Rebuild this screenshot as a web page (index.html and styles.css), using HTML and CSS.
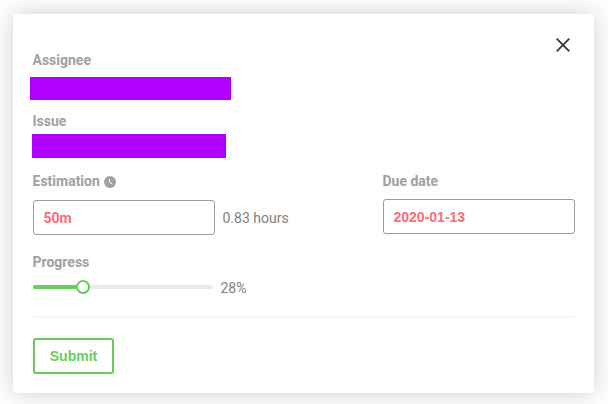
FILE: index.html
```html
<!DOCTYPE html>
<html lang="en">
<head>
<meta charset="utf-8">
<title>Edit task</title>
<link rel="stylesheet" href="styles.css">
</head>
<body>
<form class="card">
  <button class="close" type="button" aria-label="Close">
    <svg width="14" height="14" viewBox="0 0 14 14"><path d="M.7.7l12.6 12.6M13.3.7L.7 13.3"/></svg>
  </button>
  <div class="label">Assignee</div>
  <div class="redacted assignee"></div>
  <div class="label">Issue</div>
  <div class="redacted issue"></div>
  <div class="columns">
    <div class="estimation">
      <div class="label">Estimation
        <svg class="clock" width="12" height="12" viewBox="0 0 12 12"><circle cx="6" cy="6" r="6"/><path d="M5.6 2.8v3.6l2.8 1.7"/></svg>
      </div>
      <div class="row">
        <input class="field" type="text" value="50m">
        <span class="hint">0.83 hours</span>
      </div>
    </div>
    <div class="due">
      <div class="label">Due date</div>
      <input class="field date" type="text" value="2020-01-13">
    </div>
  </div>
  <div class="label">Progress</div>
  <div class="progress">
    <div class="track"><div class="fill" style="width:28%"></div><div class="handle" style="left:28%"></div></div>
    <span class="hint">28%</span>
  </div>
  <div class="divider"></div>
  <button class="submit" type="button">Submit</button>
</form>
</body>
</html>
```
FILE: styles.css
```css
* { box-sizing: border-box; }
body {
  margin: 0;
  padding: 14px 14px 11px 13px;
  height: 404px;
  overflow: hidden;
  background: #fff;
  font: 14px/20px Roboto, "Liberation Sans", sans-serif;
  color: #808080;
}
.card {
  position: relative;
  height: 379px;
  padding: 36px 19px 0 20px;
  border-radius: 2px;
  background: #fff;
  box-shadow: 0 0 24px rgba(0, 0, 0, .2);
}
.close {
  position: absolute;
  top: 24px;
  right: 24px;
  width: 14px;
  height: 14px;
  padding: 0;
  border: 0;
  background: none;
}
.close svg { display: block; fill: none; stroke: #3f3a45; stroke-width: 1.9; }
.label {
  height: 20px;
  margin-left: -.5px;
  font-weight: 700;
  color: #a0a0a0;
  white-space: nowrap;
}
.redacted { background: #b000ff; }
.assignee { width: 201px; height: 23px; margin: 7px 0 11px -3px; }
.issue { width: 194px; height: 24px; margin: 3px 0 13px -1px; }
.columns { display: flex; justify-content: space-between; height: 81px; }
.clock { margin-left: 1px; vertical-align: -2px; fill: #a0a0a0; }
.clock path { fill: none; stroke: #fff; stroke-width: 1; }
.row { display: flex; align-items: center; gap: 7.5px; margin-top: 9px; }
.field {
  display: block;
  width: 182px;
  height: 35px;
  padding: 0 9.5px;
  border: 1px solid #9b9b9b;
  border-radius: 3px;
  background: #fff;
  font: 700 14px/20px Roboto, "Liberation Sans", sans-serif;
  color: #ff6b7a;
}
.due { width: 192px; }
.date { width: 192px; margin-top: 8px; font-family: "Liberation Sans", sans-serif; }
.progress { display: flex; align-items: center; gap: 7.5px; height: 20px; margin-top: 6px; }
.track {
  position: relative;
  width: 180px;
  height: 4px;
  margin-top: -2px;
  border-radius: 2px;
  background: #e9e9e9;
}
.fill { height: 4px; border-radius: 2px 0 0 2px; background: #69cb5b; }
.handle {
  position: absolute;
  top: -5px;
  width: 14px;
  height: 14px;
  margin-left: -7px;
  border: 2px solid #69cb5b;
  border-radius: 50%;
  background: #fff;
}
.divider { height: 2px; margin: 18px 0 20px; background: #f7f7f7; }
.submit {
  display: block;
  width: 81px;
  height: 36px;
  padding: 0;
  border: 2px solid #69cb5b;
  border-radius: 3px;
  background: #fff;
  font: 700 14px/20px "Liberation Sans", sans-serif;
  color: #69cb5b;
}
```
